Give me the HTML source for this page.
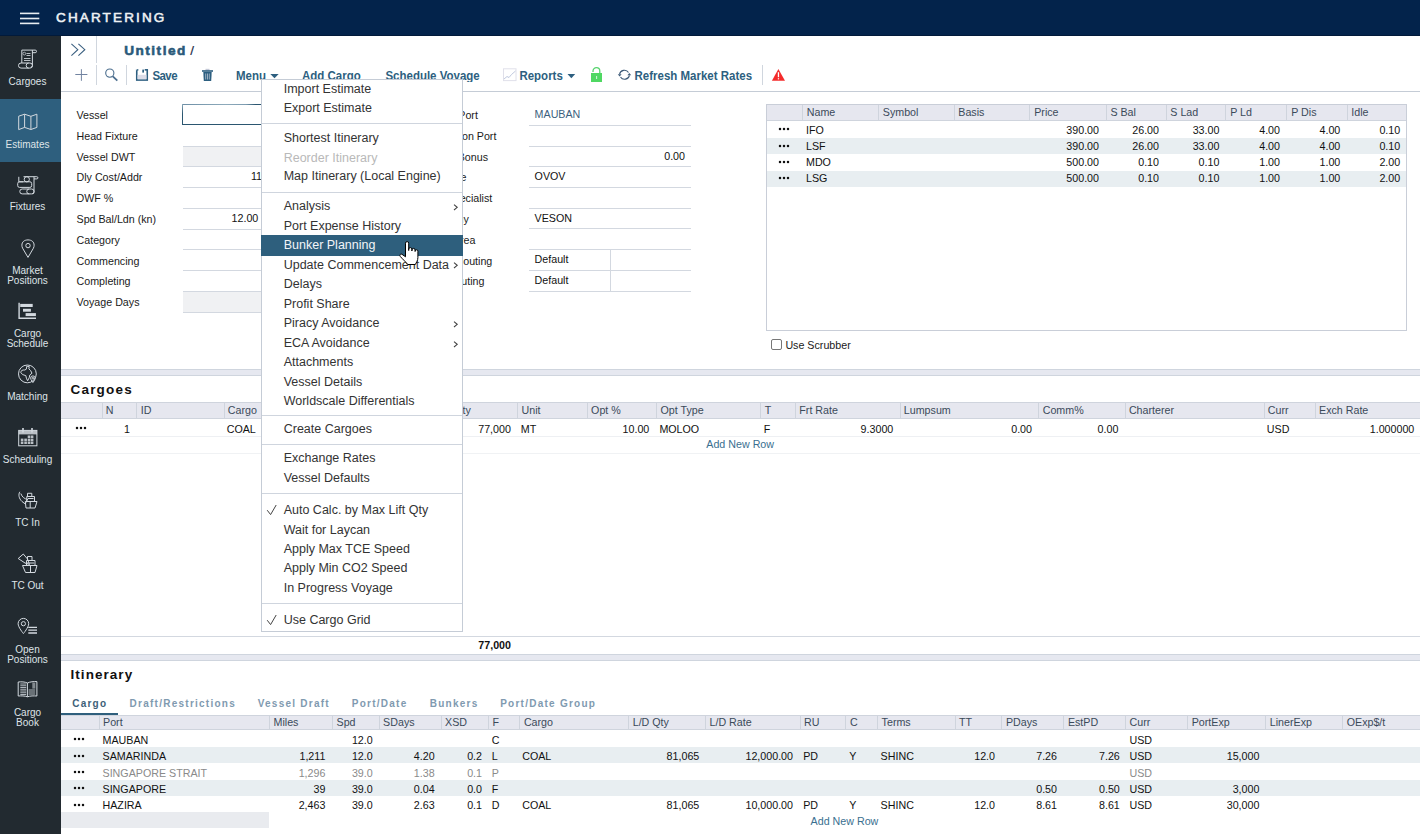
<!DOCTYPE html>
<html><head><meta charset="utf-8">
<style>
*{box-sizing:border-box;margin:0;padding:0}
html,body{width:1420px;height:834px;overflow:hidden;background:#fff;font-family:"Liberation Sans",sans-serif;color:#111}
.a{position:absolute;white-space:nowrap}
svg{position:absolute;overflow:visible}
</style></head><body>

<div style="position:absolute;left:0px;top:0px;width:1420px;height:36px;background:#03234b;"></div>
<div style="position:absolute;left:0px;top:35px;width:1420px;height:1px;background:#021a3a;"></div>
<svg style="position:absolute;left:19px;top:10px" width="22" height="16" viewBox="0 0 22 16"><g fill="#e9edf1"><rect x="1" y="2.6" width="19.3" height="1.6"/><rect x="1" y="7.7" width="19.3" height="1.6"/><rect x="1" y="12.6" width="19.3" height="1.6"/></g></svg>
<div class="a" style="top:10.57px;font-size:13.5px;line-height:13.5px;color:#eef1f4;letter-spacing:2.15px;left:56.00px;-webkit-text-stroke:0.55px #eef1f4;">CHARTERING</div>
<div style="position:absolute;left:0px;top:36px;width:61px;height:798px;background:#222a30;"></div>
<div style="position:absolute;left:0px;top:99px;width:61px;height:63px;background:#2e5f7e;"></div>
<div class="a" style="left:0;width:55px;text-align:center;top:76.83px;font-size:10px;line-height:10px;color:#dfe4e8">Cargoes</div>
<div class="a" style="left:0;width:55px;text-align:center;top:139.53px;font-size:10px;line-height:10px;color:#dfe4e8">Estimates</div>
<div class="a" style="left:0;width:55px;text-align:center;top:202.44px;font-size:10px;line-height:10px;color:#dfe4e8">Fixtures</div>
<div class="a" style="left:0;width:55px;text-align:center;top:266.04px;font-size:10px;line-height:10px;color:#dfe4e8">Market</div>
<div class="a" style="left:0;width:55px;text-align:center;top:275.64px;font-size:10px;line-height:10px;color:#dfe4e8">Positions</div>
<div class="a" style="left:0;width:55px;text-align:center;top:329.04px;font-size:10px;line-height:10px;color:#dfe4e8">Cargo</div>
<div class="a" style="left:0;width:55px;text-align:center;top:338.64px;font-size:10px;line-height:10px;color:#dfe4e8">Schedule</div>
<div class="a" style="left:0;width:55px;text-align:center;top:392.34px;font-size:10px;line-height:10px;color:#dfe4e8">Matching</div>
<div class="a" style="left:0;width:55px;text-align:center;top:455.34px;font-size:10px;line-height:10px;color:#dfe4e8">Scheduling</div>
<div class="a" style="left:0;width:55px;text-align:center;top:518.34px;font-size:10px;line-height:10px;color:#dfe4e8">TC In</div>
<div class="a" style="left:0;width:55px;text-align:center;top:581.34px;font-size:10px;line-height:10px;color:#dfe4e8">TC Out</div>
<div class="a" style="left:0;width:55px;text-align:center;top:645.03px;font-size:10px;line-height:10px;color:#dfe4e8">Open</div>
<div class="a" style="left:0;width:55px;text-align:center;top:654.63px;font-size:10px;line-height:10px;color:#dfe4e8">Positions</div>
<div class="a" style="left:0;width:55px;text-align:center;top:708.03px;font-size:10px;line-height:10px;color:#dfe4e8">Cargo</div>
<div class="a" style="left:0;width:55px;text-align:center;top:717.63px;font-size:10px;line-height:10px;color:#dfe4e8">Book</div>
<div style="position:absolute;left:96px;top:36px;width:1px;height:27px;background:#d0d6de;"></div>
<div class="a" style="top:44.09px;font-size:13.6px;line-height:13.6px;color:#2a5a7a;font-weight:bold;letter-spacing:1.5px;left:124.20px;-webkit-text-stroke:0.6px #2a5a7a;">Untitled</div>
<div class="a" style="top:43.77px;font-size:13.5px;line-height:13.5px;color:#1b2b45;left:190.30px;-webkit-text-stroke:0.2px #1b2b45;">/</div>
<div style="position:absolute;left:96px;top:65px;width:1px;height:20px;background:#d0d6de;"></div>
<div style="position:absolute;left:126px;top:65px;width:1px;height:20px;background:#d0d6de;"></div>
<div class="a" style="top:69.97px;font-size:11.5px;line-height:11.5px;color:#2d5f80;font-weight:bold;letter-spacing:-0.6px;left:152.50px;transform:scaleY(1.08);transform-origin:0 1.35px;">Save</div>
<div class="a" style="top:70.17px;font-size:11.5px;line-height:11.5px;color:#2d5f80;font-weight:bold;left:236.00px;transform:scaleY(1.08);transform-origin:0 1.35px;">Menu</div>
<div class="a" style="top:70.17px;font-size:11.5px;line-height:11.5px;color:#2d5f80;font-weight:bold;left:302.00px;transform:scaleY(1.08);transform-origin:0 1.35px;">Add Cargo</div>
<div class="a" style="top:70.17px;font-size:11.5px;line-height:11.5px;color:#2d5f80;font-weight:bold;left:385.40px;transform:scaleY(1.08);transform-origin:0 1.35px;">Schedule Voyage</div>
<div class="a" style="top:70.17px;font-size:11.5px;line-height:11.5px;color:#2d5f80;font-weight:bold;left:519.40px;transform:scaleY(1.08);transform-origin:0 1.35px;">Reports</div>
<div class="a" style="top:69.97px;font-size:11.5px;line-height:11.5px;color:#2d5f80;font-weight:bold;left:634.50px;transform:scaleY(1.08);transform-origin:0 1.35px;">Refresh Market Rates</div>
<div style="position:absolute;left:762px;top:65px;width:1px;height:20px;background:#d0d6de;"></div>
<div style="position:absolute;left:61px;top:91px;width:1359px;height:1px;background:#c5ccd6;"></div>
<div class="a" style="top:109.94px;font-size:10.7px;line-height:10.7px;color:#1a1a1a;left:76.50px;">Vessel</div>
<div class="a" style="top:130.74px;font-size:10.7px;line-height:10.7px;color:#1a1a1a;left:76.50px;">Head Fixture</div>
<div class="a" style="top:151.54px;font-size:10.7px;line-height:10.7px;color:#1a1a1a;left:76.50px;">Vessel DWT</div>
<div class="a" style="top:172.34px;font-size:10.7px;line-height:10.7px;color:#1a1a1a;left:76.50px;">Dly Cost/Addr</div>
<div class="a" style="top:193.14px;font-size:10.7px;line-height:10.7px;color:#1a1a1a;left:76.50px;">DWF %</div>
<div class="a" style="top:213.94px;font-size:10.7px;line-height:10.7px;color:#1a1a1a;left:76.50px;">Spd Bal/Ldn (kn)</div>
<div class="a" style="top:234.74px;font-size:10.7px;line-height:10.7px;color:#1a1a1a;left:76.50px;">Category</div>
<div class="a" style="top:255.54px;font-size:10.7px;line-height:10.7px;color:#1a1a1a;left:76.50px;">Commencing</div>
<div class="a" style="top:276.34px;font-size:10.7px;line-height:10.7px;color:#1a1a1a;left:76.50px;">Completing</div>
<div class="a" style="top:297.14px;font-size:10.7px;line-height:10.7px;color:#1a1a1a;left:76.50px;">Voyage Days</div>
<div style="position:absolute;left:182px;top:104px;width:200px;height:21px;background:#fff;border:1px solid #2b5670;border-top:none;"></div>
<div style="position:absolute;left:182px;top:104px;width:80px;height:1px;background:linear-gradient(to right,#6d8fa6 0%,#8eaabb 55%,#7c9bb0 80%,#2b5670 92%,#2b5670 100%);"></div>
<div style="position:absolute;left:182px;top:104px;width:1px;height:10px;background:linear-gradient(to bottom,#8eaabb,#2b5670);"></div>
<div style="position:absolute;left:183px;top:146px;width:200px;height:20.5px;background:#f0f1f3;"></div>
<div style="position:absolute;left:183px;top:291px;width:200px;height:21px;background:#f0f1f3;"></div>
<div style="position:absolute;left:183px;top:145.5px;width:200px;height:1px;background:#d3d8e0;"></div>
<div style="position:absolute;left:183px;top:166px;width:200px;height:1px;background:#d3d8e0;"></div>
<div style="position:absolute;left:183px;top:187px;width:200px;height:1px;background:#d3d8e0;"></div>
<div style="position:absolute;left:183px;top:208px;width:200px;height:1px;background:#d3d8e0;"></div>
<div style="position:absolute;left:183px;top:228.5px;width:200px;height:1px;background:#d3d8e0;"></div>
<div style="position:absolute;left:183px;top:249px;width:200px;height:1px;background:#d3d8e0;"></div>
<div style="position:absolute;left:183px;top:270px;width:200px;height:1px;background:#d3d8e0;"></div>
<div style="position:absolute;left:183px;top:291px;width:200px;height:1px;background:#d3d8e0;"></div>
<div style="position:absolute;left:183px;top:312px;width:200px;height:1px;background:#d3d8e0;"></div>
<div class="a" style="top:170.94px;font-size:10.7px;line-height:10.7px;color:#111;right:1158.00px;text-align:right;">11</div>
<div class="a" style="top:212.74px;font-size:10.7px;line-height:10.7px;color:#111;right:1161.70px;text-align:right;">12.00</div>
<div class="a" style="top:109.94px;font-size:10.7px;line-height:10.7px;color:#1a1a1a;right:942.10px;text-align:right;">Ballast Port</div>
<div class="a" style="top:130.74px;font-size:10.7px;line-height:10.7px;color:#1a1a1a;right:923.60px;text-align:right;">Reposition Port</div>
<div class="a" style="top:151.54px;font-size:10.7px;line-height:10.7px;color:#1a1a1a;right:932.00px;text-align:right;">Ballast Bonus</div>
<div class="a" style="top:172.34px;font-size:10.7px;line-height:10.7px;color:#1a1a1a;right:953.60px;text-align:right;">Vessel Type</div>
<div class="a" style="top:193.14px;font-size:10.7px;line-height:10.7px;color:#1a1a1a;right:927.70px;text-align:right;">Specialist</div>
<div class="a" style="top:213.94px;font-size:10.7px;line-height:10.7px;color:#1a1a1a;right:951.20px;text-align:right;">Company</div>
<div class="a" style="top:234.74px;font-size:10.7px;line-height:10.7px;color:#1a1a1a;right:944.50px;text-align:right;">Trade Area</div>
<div class="a" style="top:255.54px;font-size:10.7px;line-height:10.7px;color:#1a1a1a;right:927.70px;text-align:right;">Routing</div>
<div class="a" style="top:276.34px;font-size:10.7px;line-height:10.7px;color:#1a1a1a;right:935.60px;text-align:right;">Routing</div>
<div style="position:absolute;left:529px;top:125px;width:162px;height:1px;background:#d3d8e0;"></div>
<div style="position:absolute;left:529px;top:146px;width:162px;height:1px;background:#d3d8e0;"></div>
<div style="position:absolute;left:529px;top:166.3px;width:162px;height:1px;background:#d3d8e0;"></div>
<div style="position:absolute;left:529px;top:187px;width:162px;height:1px;background:#d3d8e0;"></div>
<div style="position:absolute;left:529px;top:208px;width:162px;height:1px;background:#d3d8e0;"></div>
<div style="position:absolute;left:529px;top:228.4px;width:162px;height:1px;background:#d3d8e0;"></div>
<div style="position:absolute;left:529px;top:249.3px;width:162px;height:1px;background:#d3d8e0;"></div>
<div style="position:absolute;left:529px;top:270.2px;width:162px;height:1px;background:#d3d8e0;"></div>
<div style="position:absolute;left:529px;top:291px;width:162px;height:1px;background:#d3d8e0;"></div>
<div style="position:absolute;left:610px;top:249px;width:1px;height:42px;background:#d3d8e0;"></div>
<div class="a" style="top:109.24px;font-size:10.7px;line-height:10.7px;color:#3d5f7e;left:534.60px;">MAUBAN</div>
<div class="a" style="top:151.24px;font-size:10.7px;line-height:10.7px;color:#111;right:735.00px;text-align:right;">0.00</div>
<div class="a" style="top:171.44px;font-size:10.7px;line-height:10.7px;color:#111;left:534.60px;">OVOV</div>
<div class="a" style="top:212.94px;font-size:10.7px;line-height:10.7px;color:#111;left:534.60px;">VESON</div>
<div class="a" style="top:254.44px;font-size:10.7px;line-height:10.7px;color:#111;left:534.60px;">Default</div>
<div class="a" style="top:275.24px;font-size:10.7px;line-height:10.7px;color:#111;left:534.60px;">Default</div>
<div style="position:absolute;left:766px;top:104px;width:641px;height:227px;background:#fff;border:1px solid #c9ced8;"></div>
<div style="position:absolute;left:767px;top:105px;width:639px;height:16px;background:#e6e7ef;border-bottom:1px solid #cfd4dd;"></div>
<div style="position:absolute;left:802px;top:105px;width:1px;height:15px;background:#cfd4dd;"></div>
<div style="position:absolute;left:878px;top:105px;width:1px;height:15px;background:#cfd4dd;"></div>
<div style="position:absolute;left:953.5px;top:105px;width:1px;height:15px;background:#cfd4dd;"></div>
<div style="position:absolute;left:1029.4px;top:105px;width:1px;height:15px;background:#cfd4dd;"></div>
<div style="position:absolute;left:1105.6px;top:105px;width:1px;height:15px;background:#cfd4dd;"></div>
<div style="position:absolute;left:1165.5px;top:105px;width:1px;height:15px;background:#cfd4dd;"></div>
<div style="position:absolute;left:1225.4px;top:105px;width:1px;height:15px;background:#cfd4dd;"></div>
<div style="position:absolute;left:1286.4px;top:105px;width:1px;height:15px;background:#cfd4dd;"></div>
<div style="position:absolute;left:1346.5px;top:105px;width:1px;height:15px;background:#cfd4dd;"></div>
<div class="a" style="top:106.74px;font-size:10.7px;line-height:10.7px;color:#3b4a5a;left:806.80px;">Name</div>
<div class="a" style="top:106.74px;font-size:10.7px;line-height:10.7px;color:#3b4a5a;left:882.80px;">Symbol</div>
<div class="a" style="top:106.74px;font-size:10.7px;line-height:10.7px;color:#3b4a5a;left:958.30px;">Basis</div>
<div class="a" style="top:106.74px;font-size:10.7px;line-height:10.7px;color:#3b4a5a;left:1034.20px;">Price</div>
<div class="a" style="top:106.74px;font-size:10.7px;line-height:10.7px;color:#3b4a5a;left:1110.40px;">S Bal</div>
<div class="a" style="top:106.74px;font-size:10.7px;line-height:10.7px;color:#3b4a5a;left:1170.30px;">S Lad</div>
<div class="a" style="top:106.74px;font-size:10.7px;line-height:10.7px;color:#3b4a5a;left:1230.20px;">P Ld</div>
<div class="a" style="top:106.74px;font-size:10.7px;line-height:10.7px;color:#3b4a5a;left:1291.20px;">P Dis</div>
<div class="a" style="top:106.74px;font-size:10.7px;line-height:10.7px;color:#3b4a5a;left:1351.30px;">Idle</div>
<div class="a" style="top:124.54px;font-size:10.7px;line-height:10.7px;color:#111;left:806.00px;">IFO</div>
<div class="a" style="top:124.54px;font-size:10.7px;line-height:10.7px;color:#111;right:321.00px;text-align:right;">390.00</div>
<div class="a" style="top:124.54px;font-size:10.7px;line-height:10.7px;color:#111;right:261.00px;text-align:right;">26.00</div>
<div class="a" style="top:124.54px;font-size:10.7px;line-height:10.7px;color:#111;right:200.60px;text-align:right;">33.00</div>
<div class="a" style="top:124.54px;font-size:10.7px;line-height:10.7px;color:#111;right:140.00px;text-align:right;">4.00</div>
<div class="a" style="top:124.54px;font-size:10.7px;line-height:10.7px;color:#111;right:79.70px;text-align:right;">4.00</div>
<div class="a" style="top:124.54px;font-size:10.7px;line-height:10.7px;color:#111;right:19.80px;text-align:right;">0.10</div>
<svg style="left:778.30px;top:127.35px" width="12" height="4" viewBox="0 0 12 4"><g fill="#111"><circle cx="2" cy="2" r="1.25"/><circle cx="6" cy="2" r="1.25"/><circle cx="10" cy="2" r="1.25"/></g></svg>
<div style="position:absolute;left:767px;top:138.10000000000002px;width:639px;height:16px;background:#e8eef1;"></div>
<div class="a" style="top:140.69px;font-size:10.7px;line-height:10.7px;color:#111;left:806.00px;">LSF</div>
<div class="a" style="top:140.69px;font-size:10.7px;line-height:10.7px;color:#111;right:321.00px;text-align:right;">390.00</div>
<div class="a" style="top:140.69px;font-size:10.7px;line-height:10.7px;color:#111;right:261.00px;text-align:right;">26.00</div>
<div class="a" style="top:140.69px;font-size:10.7px;line-height:10.7px;color:#111;right:200.60px;text-align:right;">33.00</div>
<div class="a" style="top:140.69px;font-size:10.7px;line-height:10.7px;color:#111;right:140.00px;text-align:right;">4.00</div>
<div class="a" style="top:140.69px;font-size:10.7px;line-height:10.7px;color:#111;right:79.70px;text-align:right;">4.00</div>
<div class="a" style="top:140.69px;font-size:10.7px;line-height:10.7px;color:#111;right:19.80px;text-align:right;">0.10</div>
<svg style="left:778.30px;top:143.50px" width="12" height="4" viewBox="0 0 12 4"><g fill="#111"><circle cx="2" cy="2" r="1.25"/><circle cx="6" cy="2" r="1.25"/><circle cx="10" cy="2" r="1.25"/></g></svg>
<div class="a" style="top:156.84px;font-size:10.7px;line-height:10.7px;color:#111;left:806.00px;">MDO</div>
<div class="a" style="top:156.84px;font-size:10.7px;line-height:10.7px;color:#111;right:321.00px;text-align:right;">500.00</div>
<div class="a" style="top:156.84px;font-size:10.7px;line-height:10.7px;color:#111;right:261.00px;text-align:right;">0.10</div>
<div class="a" style="top:156.84px;font-size:10.7px;line-height:10.7px;color:#111;right:200.60px;text-align:right;">0.10</div>
<div class="a" style="top:156.84px;font-size:10.7px;line-height:10.7px;color:#111;right:140.00px;text-align:right;">1.00</div>
<div class="a" style="top:156.84px;font-size:10.7px;line-height:10.7px;color:#111;right:79.70px;text-align:right;">1.00</div>
<div class="a" style="top:156.84px;font-size:10.7px;line-height:10.7px;color:#111;right:19.80px;text-align:right;">2.00</div>
<svg style="left:778.30px;top:159.65px" width="12" height="4" viewBox="0 0 12 4"><g fill="#111"><circle cx="2" cy="2" r="1.25"/><circle cx="6" cy="2" r="1.25"/><circle cx="10" cy="2" r="1.25"/></g></svg>
<div style="position:absolute;left:767px;top:170.70000000000002px;width:639px;height:16px;background:#e8eef1;"></div>
<div class="a" style="top:172.99px;font-size:10.7px;line-height:10.7px;color:#111;left:806.00px;">LSG</div>
<div class="a" style="top:172.99px;font-size:10.7px;line-height:10.7px;color:#111;right:321.00px;text-align:right;">500.00</div>
<div class="a" style="top:172.99px;font-size:10.7px;line-height:10.7px;color:#111;right:261.00px;text-align:right;">0.10</div>
<div class="a" style="top:172.99px;font-size:10.7px;line-height:10.7px;color:#111;right:200.60px;text-align:right;">0.10</div>
<div class="a" style="top:172.99px;font-size:10.7px;line-height:10.7px;color:#111;right:140.00px;text-align:right;">1.00</div>
<div class="a" style="top:172.99px;font-size:10.7px;line-height:10.7px;color:#111;right:79.70px;text-align:right;">1.00</div>
<div class="a" style="top:172.99px;font-size:10.7px;line-height:10.7px;color:#111;right:19.80px;text-align:right;">2.00</div>
<svg style="left:778.30px;top:175.80px" width="12" height="4" viewBox="0 0 12 4"><g fill="#111"><circle cx="2" cy="2" r="1.25"/><circle cx="6" cy="2" r="1.25"/><circle cx="10" cy="2" r="1.25"/></g></svg>
<div style="position:absolute;left:771px;top:339px;width:11px;height:11px;background:#fff;border:1px solid #777;border-radius:2px;"></div>
<div class="a" style="top:339.84px;font-size:10.7px;line-height:10.7px;color:#1a1a1a;left:785.40px;">Use Scrubber</div>
<div style="position:absolute;left:61px;top:369px;width:1359px;height:7px;background:#e6e8f0;border-top:1px solid #cfd5de;border-bottom:1px solid #cfd5de;"></div>
<div style="position:absolute;left:61px;top:653.5px;width:1359px;height:7px;background:#e6e8f0;border-top:1px solid #cfd5de;border-bottom:1px solid #cfd5de;"></div>
<div class="a" style="top:383.47px;font-size:13.5px;line-height:13.5px;color:#111;font-weight:bold;letter-spacing:1.2px;left:70.50px;">Cargoes</div>
<div style="position:absolute;left:61px;top:402px;width:1359px;height:16.5px;background:#e6e7ef;border-top:1px solid #cfd4dd;border-bottom:1px solid #cfd4dd;"></div>
<div style="position:absolute;left:101.5px;top:402.5px;width:1px;height:15.5px;background:#cfd4dd;"></div>
<div style="position:absolute;left:136.4px;top:402.5px;width:1px;height:15.5px;background:#cfd4dd;"></div>
<div style="position:absolute;left:223.5px;top:402.5px;width:1px;height:15.5px;background:#cfd4dd;"></div>
<div style="position:absolute;left:450px;top:402.5px;width:1px;height:15.5px;background:#cfd4dd;"></div>
<div style="position:absolute;left:517.2px;top:402.5px;width:1px;height:15.5px;background:#cfd4dd;"></div>
<div style="position:absolute;left:586.8px;top:402.5px;width:1px;height:15.5px;background:#cfd4dd;"></div>
<div style="position:absolute;left:656.2px;top:402.5px;width:1px;height:15.5px;background:#cfd4dd;"></div>
<div style="position:absolute;left:760.4px;top:402.5px;width:1px;height:15.5px;background:#cfd4dd;"></div>
<div style="position:absolute;left:795px;top:402.5px;width:1px;height:15.5px;background:#cfd4dd;"></div>
<div style="position:absolute;left:899.5px;top:402.5px;width:1px;height:15.5px;background:#cfd4dd;"></div>
<div style="position:absolute;left:1038.4px;top:402.5px;width:1px;height:15.5px;background:#cfd4dd;"></div>
<div style="position:absolute;left:1124.6px;top:402.5px;width:1px;height:15.5px;background:#cfd4dd;"></div>
<div style="position:absolute;left:1263.5px;top:402.5px;width:1px;height:15.5px;background:#cfd4dd;"></div>
<div style="position:absolute;left:1314.7px;top:402.5px;width:1px;height:15.5px;background:#cfd4dd;"></div>
<div class="a" style="top:405.14px;font-size:10.7px;line-height:10.7px;color:#3b4a5a;left:105.80px;">N</div>
<div class="a" style="top:405.14px;font-size:10.7px;line-height:10.7px;color:#3b4a5a;left:140.70px;">ID</div>
<div class="a" style="top:405.14px;font-size:10.7px;line-height:10.7px;color:#3b4a5a;left:227.80px;">Cargo</div>
<div class="a" style="top:405.14px;font-size:10.7px;line-height:10.7px;color:#3b4a5a;left:454.30px;">Qty</div>
<div class="a" style="top:405.14px;font-size:10.7px;line-height:10.7px;color:#3b4a5a;left:521.50px;">Unit</div>
<div class="a" style="top:405.14px;font-size:10.7px;line-height:10.7px;color:#3b4a5a;left:591.10px;">Opt %</div>
<div class="a" style="top:405.14px;font-size:10.7px;line-height:10.7px;color:#3b4a5a;left:660.50px;">Opt Type</div>
<div class="a" style="top:405.14px;font-size:10.7px;line-height:10.7px;color:#3b4a5a;left:764.70px;">T</div>
<div class="a" style="top:405.14px;font-size:10.7px;line-height:10.7px;color:#3b4a5a;left:799.30px;">Frt Rate</div>
<div class="a" style="top:405.14px;font-size:10.7px;line-height:10.7px;color:#3b4a5a;left:903.80px;">Lumpsum</div>
<div class="a" style="top:405.14px;font-size:10.7px;line-height:10.7px;color:#3b4a5a;left:1042.70px;">Comm%</div>
<div class="a" style="top:405.14px;font-size:10.7px;line-height:10.7px;color:#3b4a5a;left:1128.90px;">Charterer</div>
<div class="a" style="top:405.14px;font-size:10.7px;line-height:10.7px;color:#3b4a5a;left:1267.80px;">Curr</div>
<div class="a" style="top:405.14px;font-size:10.7px;line-height:10.7px;color:#3b4a5a;left:1319.00px;">Exch Rate</div>
<svg style="left:75.40px;top:426.40px" width="12" height="4" viewBox="0 0 12 4"><g fill="#111"><circle cx="2" cy="2" r="1.25"/><circle cx="6" cy="2" r="1.25"/><circle cx="10" cy="2" r="1.25"/></g></svg>
<div class="a" style="top:423.84px;font-size:10.7px;line-height:10.7px;color:#111;right:1290.00px;text-align:right;">1</div>
<div class="a" style="top:423.84px;font-size:10.7px;line-height:10.7px;color:#111;left:226.70px;">COAL</div>
<div class="a" style="top:423.84px;font-size:10.7px;line-height:10.7px;color:#111;right:909.10px;text-align:right;">77,000</div>
<div class="a" style="top:423.84px;font-size:10.7px;line-height:10.7px;color:#111;left:520.80px;">MT</div>
<div class="a" style="top:423.84px;font-size:10.7px;line-height:10.7px;color:#111;right:770.70px;text-align:right;">10.00</div>
<div class="a" style="top:423.84px;font-size:10.7px;line-height:10.7px;color:#111;left:659.40px;">MOLOO</div>
<div class="a" style="top:423.84px;font-size:10.7px;line-height:10.7px;color:#111;left:763.70px;">F</div>
<div class="a" style="top:423.84px;font-size:10.7px;line-height:10.7px;color:#111;right:526.70px;text-align:right;">9.3000</div>
<div class="a" style="top:423.84px;font-size:10.7px;line-height:10.7px;color:#111;right:388.00px;text-align:right;">0.00</div>
<div class="a" style="top:423.84px;font-size:10.7px;line-height:10.7px;color:#111;right:301.60px;text-align:right;">0.00</div>
<div class="a" style="top:423.84px;font-size:10.7px;line-height:10.7px;color:#111;left:1266.80px;">USD</div>
<div class="a" style="top:423.84px;font-size:10.7px;line-height:10.7px;color:#111;right:5.70px;text-align:right;">1.000000</div>
<div style="position:absolute;left:61px;top:436px;width:1359px;height:1px;background:#eef0f3;"></div>
<div class="a" style="top:438.94px;font-size:10.7px;line-height:10.7px;color:#3a6f8f;left:706.30px;">Add New Row</div>
<div style="position:absolute;left:61px;top:452.5px;width:1359px;height:1px;background:#f0f2f4;"></div>
<div style="position:absolute;left:61px;top:636px;width:1359px;height:1px;background:#d3d8e0;"></div>
<div class="a" style="top:639.54px;font-size:10.7px;line-height:10.7px;color:#111;font-weight:bold;right:909.00px;text-align:right;">77,000</div>
<div class="a" style="top:667.97px;font-size:13.5px;line-height:13.5px;color:#111;font-weight:bold;letter-spacing:1.05px;left:70.50px;">Itinerary</div>
<div class="a" style="top:698.83px;font-size:10px;line-height:10px;color:#3d5f78;font-weight:bold;letter-spacing:1.25px;left:72.20px;">Cargo</div>
<div class="a" style="top:698.83px;font-size:10px;line-height:10px;color:#7f9ab0;font-weight:bold;letter-spacing:1.25px;left:129.60px;">Draft/Restrictions</div>
<div class="a" style="top:698.83px;font-size:10px;line-height:10px;color:#7f9ab0;font-weight:bold;letter-spacing:1.25px;left:257.70px;">Vessel Draft</div>
<div class="a" style="top:698.83px;font-size:10px;line-height:10px;color:#7f9ab0;font-weight:bold;letter-spacing:1.25px;left:351.80px;">Port/Date</div>
<div class="a" style="top:698.83px;font-size:10px;line-height:10px;color:#7f9ab0;font-weight:bold;letter-spacing:1.25px;left:429.70px;">Bunkers</div>
<div class="a" style="top:698.83px;font-size:10px;line-height:10px;color:#7f9ab0;font-weight:bold;letter-spacing:1.25px;left:500.20px;">Port/Date Group</div>
<div style="position:absolute;left:61px;top:713px;width:57px;height:2px;background:#2f5f7d;"></div>
<div style="position:absolute;left:61px;top:714.5px;width:1359px;height:15.5px;background:#e6e7ef;border-top:1px solid #cfd4dd;border-bottom:1px solid #cfd4dd;"></div>
<div style="position:absolute;left:98.5px;top:715.5px;width:1px;height:13.5px;background:#cfd4dd;"></div>
<div style="position:absolute;left:269px;top:715.5px;width:1px;height:13.5px;background:#cfd4dd;"></div>
<div style="position:absolute;left:332px;top:715.5px;width:1px;height:13.5px;background:#cfd4dd;"></div>
<div style="position:absolute;left:378.6px;top:715.5px;width:1px;height:13.5px;background:#cfd4dd;"></div>
<div style="position:absolute;left:440.5px;top:715.5px;width:1px;height:13.5px;background:#cfd4dd;"></div>
<div style="position:absolute;left:487.9px;top:715.5px;width:1px;height:13.5px;background:#cfd4dd;"></div>
<div style="position:absolute;left:519.4px;top:715.5px;width:1px;height:13.5px;background:#cfd4dd;"></div>
<div style="position:absolute;left:628.2px;top:715.5px;width:1px;height:13.5px;background:#cfd4dd;"></div>
<div style="position:absolute;left:705px;top:715.5px;width:1px;height:13.5px;background:#cfd4dd;"></div>
<div style="position:absolute;left:799.6px;top:715.5px;width:1px;height:13.5px;background:#cfd4dd;"></div>
<div style="position:absolute;left:845.4px;top:715.5px;width:1px;height:13.5px;background:#cfd4dd;"></div>
<div style="position:absolute;left:877.1px;top:715.5px;width:1px;height:13.5px;background:#cfd4dd;"></div>
<div style="position:absolute;left:954.6px;top:715.5px;width:1px;height:13.5px;background:#cfd4dd;"></div>
<div style="position:absolute;left:1001.4px;top:715.5px;width:1px;height:13.5px;background:#cfd4dd;"></div>
<div style="position:absolute;left:1063.4px;top:715.5px;width:1px;height:13.5px;background:#cfd4dd;"></div>
<div style="position:absolute;left:1125.1px;top:715.5px;width:1px;height:13.5px;background:#cfd4dd;"></div>
<div style="position:absolute;left:1187.2px;top:715.5px;width:1px;height:13.5px;background:#cfd4dd;"></div>
<div style="position:absolute;left:1265.3px;top:715.5px;width:1px;height:13.5px;background:#cfd4dd;"></div>
<div style="position:absolute;left:1342.2px;top:715.5px;width:1px;height:13.5px;background:#cfd4dd;"></div>
<div class="a" style="top:716.94px;font-size:10.7px;line-height:10.7px;color:#3b4a5a;left:103.00px;">Port</div>
<div class="a" style="top:716.94px;font-size:10.7px;line-height:10.7px;color:#3b4a5a;left:273.50px;">Miles</div>
<div class="a" style="top:716.94px;font-size:10.7px;line-height:10.7px;color:#3b4a5a;left:336.50px;">Spd</div>
<div class="a" style="top:716.94px;font-size:10.7px;line-height:10.7px;color:#3b4a5a;left:383.10px;">SDays</div>
<div class="a" style="top:716.94px;font-size:10.7px;line-height:10.7px;color:#3b4a5a;left:445.00px;">XSD</div>
<div class="a" style="top:716.94px;font-size:10.7px;line-height:10.7px;color:#3b4a5a;left:492.40px;">F</div>
<div class="a" style="top:716.94px;font-size:10.7px;line-height:10.7px;color:#3b4a5a;left:523.90px;">Cargo</div>
<div class="a" style="top:716.94px;font-size:10.7px;line-height:10.7px;color:#3b4a5a;left:632.70px;">L/D Qty</div>
<div class="a" style="top:716.94px;font-size:10.7px;line-height:10.7px;color:#3b4a5a;left:709.50px;">L/D Rate</div>
<div class="a" style="top:716.94px;font-size:10.7px;line-height:10.7px;color:#3b4a5a;left:804.10px;">RU</div>
<div class="a" style="top:716.94px;font-size:10.7px;line-height:10.7px;color:#3b4a5a;left:849.90px;">C</div>
<div class="a" style="top:716.94px;font-size:10.7px;line-height:10.7px;color:#3b4a5a;left:881.60px;">Terms</div>
<div class="a" style="top:716.94px;font-size:10.7px;line-height:10.7px;color:#3b4a5a;left:959.10px;">TT</div>
<div class="a" style="top:716.94px;font-size:10.7px;line-height:10.7px;color:#3b4a5a;left:1005.90px;">PDays</div>
<div class="a" style="top:716.94px;font-size:10.7px;line-height:10.7px;color:#3b4a5a;left:1067.90px;">EstPD</div>
<div class="a" style="top:716.94px;font-size:10.7px;line-height:10.7px;color:#3b4a5a;left:1129.60px;">Curr</div>
<div class="a" style="top:716.94px;font-size:10.7px;line-height:10.7px;color:#3b4a5a;left:1191.70px;">PortExp</div>
<div class="a" style="top:716.94px;font-size:10.7px;line-height:10.7px;color:#3b4a5a;left:1269.80px;">LinerExp</div>
<div class="a" style="top:716.94px;font-size:10.7px;line-height:10.7px;color:#3b4a5a;left:1346.70px;">OExp$/t</div>
<div style="position:absolute;left:61px;top:747.2px;width:1359px;height:15.7px;background:#e8eef1;"></div>
<div style="position:absolute;left:61px;top:779.9px;width:1359px;height:15.7px;background:#e8eef1;"></div>
<svg style="left:73.40px;top:737.35px" width="12" height="4" viewBox="0 0 12 4"><g fill="#111"><circle cx="2" cy="2" r="1.25"/><circle cx="6" cy="2" r="1.25"/><circle cx="10" cy="2" r="1.25"/></g></svg>
<div class="a" style="top:734.94px;font-size:10.7px;line-height:10.7px;color:#111;left:102.50px;">MAUBAN</div>
<div class="a" style="top:734.94px;font-size:10.7px;line-height:10.7px;color:#111;right:1047.30px;text-align:right;">12.0</div>
<div class="a" style="top:734.94px;font-size:10.7px;line-height:10.7px;color:#111;left:491.80px;">C</div>
<div class="a" style="top:734.94px;font-size:10.7px;line-height:10.7px;color:#111;left:1129.50px;">USD</div>
<svg style="left:73.40px;top:753.65px" width="12" height="4" viewBox="0 0 12 4"><g fill="#111"><circle cx="2" cy="2" r="1.25"/><circle cx="6" cy="2" r="1.25"/><circle cx="10" cy="2" r="1.25"/></g></svg>
<div class="a" style="top:751.24px;font-size:10.7px;line-height:10.7px;color:#111;left:102.50px;">SAMARINDA</div>
<div class="a" style="top:751.24px;font-size:10.7px;line-height:10.7px;color:#111;right:1094.60px;text-align:right;">1,211</div>
<div class="a" style="top:751.24px;font-size:10.7px;line-height:10.7px;color:#111;right:1047.30px;text-align:right;">12.0</div>
<div class="a" style="top:751.24px;font-size:10.7px;line-height:10.7px;color:#111;right:985.40px;text-align:right;">4.20</div>
<div class="a" style="top:751.24px;font-size:10.7px;line-height:10.7px;color:#111;right:938.00px;text-align:right;">0.2</div>
<div class="a" style="top:751.24px;font-size:10.7px;line-height:10.7px;color:#111;left:491.80px;">L</div>
<div class="a" style="top:751.24px;font-size:10.7px;line-height:10.7px;color:#111;left:522.20px;">COAL</div>
<div class="a" style="top:751.24px;font-size:10.7px;line-height:10.7px;color:#111;right:720.70px;text-align:right;">81,065</div>
<div class="a" style="top:751.24px;font-size:10.7px;line-height:10.7px;color:#111;right:627.00px;text-align:right;">12,000.00</div>
<div class="a" style="top:751.24px;font-size:10.7px;line-height:10.7px;color:#111;left:803.20px;">PD</div>
<div class="a" style="top:751.24px;font-size:10.7px;line-height:10.7px;color:#111;left:849.30px;">Y</div>
<div class="a" style="top:751.24px;font-size:10.7px;line-height:10.7px;color:#111;left:880.60px;">SHINC</div>
<div class="a" style="top:751.24px;font-size:10.7px;line-height:10.7px;color:#111;right:425.00px;text-align:right;">12.0</div>
<div class="a" style="top:751.24px;font-size:10.7px;line-height:10.7px;color:#111;right:363.00px;text-align:right;">7.26</div>
<div class="a" style="top:751.24px;font-size:10.7px;line-height:10.7px;color:#111;right:300.20px;text-align:right;">7.26</div>
<div class="a" style="top:751.24px;font-size:10.7px;line-height:10.7px;color:#111;left:1129.50px;">USD</div>
<div class="a" style="top:751.24px;font-size:10.7px;line-height:10.7px;color:#111;right:160.60px;text-align:right;">15,000</div>
<svg style="left:73.40px;top:769.95px" width="12" height="4" viewBox="0 0 12 4"><g fill="#111"><circle cx="2" cy="2" r="1.25"/><circle cx="6" cy="2" r="1.25"/><circle cx="10" cy="2" r="1.25"/></g></svg>
<div class="a" style="top:767.54px;font-size:10.7px;line-height:10.7px;color:#8a8a8a;left:102.50px;">SINGAPORE STRAIT</div>
<div class="a" style="top:767.54px;font-size:10.7px;line-height:10.7px;color:#8a8a8a;right:1094.60px;text-align:right;">1,296</div>
<div class="a" style="top:767.54px;font-size:10.7px;line-height:10.7px;color:#8a8a8a;right:1047.30px;text-align:right;">39.0</div>
<div class="a" style="top:767.54px;font-size:10.7px;line-height:10.7px;color:#8a8a8a;right:985.40px;text-align:right;">1.38</div>
<div class="a" style="top:767.54px;font-size:10.7px;line-height:10.7px;color:#8a8a8a;right:938.00px;text-align:right;">0.1</div>
<div class="a" style="top:767.54px;font-size:10.7px;line-height:10.7px;color:#8a8a8a;left:491.80px;">P</div>
<div class="a" style="top:767.54px;font-size:10.7px;line-height:10.7px;color:#8a8a8a;left:1129.50px;">USD</div>
<svg style="left:73.40px;top:786.25px" width="12" height="4" viewBox="0 0 12 4"><g fill="#111"><circle cx="2" cy="2" r="1.25"/><circle cx="6" cy="2" r="1.25"/><circle cx="10" cy="2" r="1.25"/></g></svg>
<div class="a" style="top:783.84px;font-size:10.7px;line-height:10.7px;color:#111;left:102.50px;">SINGAPORE</div>
<div class="a" style="top:783.84px;font-size:10.7px;line-height:10.7px;color:#111;right:1094.60px;text-align:right;">39</div>
<div class="a" style="top:783.84px;font-size:10.7px;line-height:10.7px;color:#111;right:1047.30px;text-align:right;">39.0</div>
<div class="a" style="top:783.84px;font-size:10.7px;line-height:10.7px;color:#111;right:985.40px;text-align:right;">0.04</div>
<div class="a" style="top:783.84px;font-size:10.7px;line-height:10.7px;color:#111;right:938.00px;text-align:right;">0.0</div>
<div class="a" style="top:783.84px;font-size:10.7px;line-height:10.7px;color:#111;left:491.80px;">F</div>
<div class="a" style="top:783.84px;font-size:10.7px;line-height:10.7px;color:#111;right:363.00px;text-align:right;">0.50</div>
<div class="a" style="top:783.84px;font-size:10.7px;line-height:10.7px;color:#111;right:300.20px;text-align:right;">0.50</div>
<div class="a" style="top:783.84px;font-size:10.7px;line-height:10.7px;color:#111;left:1129.50px;">USD</div>
<div class="a" style="top:783.84px;font-size:10.7px;line-height:10.7px;color:#111;right:160.60px;text-align:right;">3,000</div>
<svg style="left:73.40px;top:802.55px" width="12" height="4" viewBox="0 0 12 4"><g fill="#111"><circle cx="2" cy="2" r="1.25"/><circle cx="6" cy="2" r="1.25"/><circle cx="10" cy="2" r="1.25"/></g></svg>
<div class="a" style="top:800.14px;font-size:10.7px;line-height:10.7px;color:#111;left:102.50px;">HAZIRA</div>
<div class="a" style="top:800.14px;font-size:10.7px;line-height:10.7px;color:#111;right:1094.60px;text-align:right;">2,463</div>
<div class="a" style="top:800.14px;font-size:10.7px;line-height:10.7px;color:#111;right:1047.30px;text-align:right;">39.0</div>
<div class="a" style="top:800.14px;font-size:10.7px;line-height:10.7px;color:#111;right:985.40px;text-align:right;">2.63</div>
<div class="a" style="top:800.14px;font-size:10.7px;line-height:10.7px;color:#111;right:938.00px;text-align:right;">0.1</div>
<div class="a" style="top:800.14px;font-size:10.7px;line-height:10.7px;color:#111;left:491.80px;">D</div>
<div class="a" style="top:800.14px;font-size:10.7px;line-height:10.7px;color:#111;left:522.20px;">COAL</div>
<div class="a" style="top:800.14px;font-size:10.7px;line-height:10.7px;color:#111;right:720.70px;text-align:right;">81,065</div>
<div class="a" style="top:800.14px;font-size:10.7px;line-height:10.7px;color:#111;right:627.00px;text-align:right;">10,000.00</div>
<div class="a" style="top:800.14px;font-size:10.7px;line-height:10.7px;color:#111;left:803.20px;">PD</div>
<div class="a" style="top:800.14px;font-size:10.7px;line-height:10.7px;color:#111;left:849.30px;">Y</div>
<div class="a" style="top:800.14px;font-size:10.7px;line-height:10.7px;color:#111;left:880.60px;">SHINC</div>
<div class="a" style="top:800.14px;font-size:10.7px;line-height:10.7px;color:#111;right:425.00px;text-align:right;">12.0</div>
<div class="a" style="top:800.14px;font-size:10.7px;line-height:10.7px;color:#111;right:363.00px;text-align:right;">8.61</div>
<div class="a" style="top:800.14px;font-size:10.7px;line-height:10.7px;color:#111;right:300.20px;text-align:right;">8.61</div>
<div class="a" style="top:800.14px;font-size:10.7px;line-height:10.7px;color:#111;left:1129.50px;">USD</div>
<div class="a" style="top:800.14px;font-size:10.7px;line-height:10.7px;color:#111;right:160.60px;text-align:right;">30,000</div>
<div style="position:absolute;left:61px;top:812px;width:208px;height:15.6px;background:#e9ebef;"></div>
<div class="a" style="top:815.94px;font-size:10.7px;line-height:10.7px;color:#3a6f8f;left:810.60px;">Add New Row</div>
<svg style="left:17px;top:49px" width="21" height="21" viewBox="0 0 21 21"><g fill="none" stroke="#d3d9df" stroke-width="1"><path d="M4.8,14 V1.1 H18.2 a1.3,1.3 0 0 1 0,2.6 H15.4"/><path d="M15.4,1.1 V16.6 a1.6,1.6 0 0 1 -1.6,1.6"/><rect x="1.5" y="14" width="14" height="5.1" rx="2.55"/><path d="M11.6,14 a2.4,2.55 0 0 0 0,5.1"/><path d="M9.5,4.5 H13.5 M9.5,6.5 H13.5 M7,9.5 H13.5 M7,11.5 H13.5" stroke-opacity="0.85"/><circle cx="7.3" cy="4.6" r="1.4" stroke-opacity="0.7"/></g></svg>
<svg style="left:18px;top:113px" width="20" height="18" viewBox="0 0 20 18"><g fill="none" stroke="#d3d9df" stroke-width="1"><path d="M0.7,3.2 L6.6,1.2 L12.9,3.3 L18.9,1.2 V14.4 L12.9,16.5 L6.6,14.4 L0.7,16.6 Z M6.6,1.2 V14.4 M12.9,3.3 V16.5"/></g></svg>
<svg style="left:16px;top:175px" width="23" height="21" viewBox="0 0 23 21"><g fill="none" stroke="#d3d9df" stroke-width="1"><path d="M7.5,1.7 H20.8 a1.1,1.1 0 0 1 0,2.2 H18"/><circle cx="10.8" cy="4.3" r="2.6"/><path d="M2.8,1.8 V6.8 H7.2"/><rect x="1.7" y="6.8" width="14" height="5.6" rx="1.8"/><path d="M18,1.8 V17.3 a1.6,1.6 0 0 1 -1.6,1.6"/><rect x="3.8" y="14" width="14.2" height="4.9" rx="2.4"/><path d="M13.2,14 a2.4,2.4 0 0 0 0,4.9"/></g></svg>
<svg style="left:20.5px;top:238.5px" width="14" height="20" viewBox="0 0 14 20"><g fill="none" stroke="#d3d9df" stroke-width="1"><path d="M7,18.4 L1.6,9.2 C1,8.1 0.9,7 0.9,6.2 C0.9,2.8 3.4,0.9 7,0.9 C10.6,0.9 13.1,2.8 13.1,6.2 C13.1,7 13,8.1 12.4,9.2 Z"/><circle cx="7" cy="6.6" r="2.2"/></g></svg>
<svg style="left:18px;top:302px" width="19" height="18" viewBox="0 0 19 18"><path d="M1.1,0.8 V16.2 H18" fill="none" stroke="#d3d9df" stroke-width="1.4"/><g fill="#d3d9df"><rect x="2.2" y="1.9" width="12.5" height="3.1"/><rect x="5" y="6.8" width="7.9" height="2.9"/><rect x="7.6" y="11.1" width="10.3" height="3"/></g></svg>
<svg style="left:17px;top:364px" width="21" height="21" viewBox="0 0 21 21"><g fill="none" stroke="#d3d9df" stroke-width="1"><circle cx="10.4" cy="9.9" r="8.9"/><path d="M3.8,8.5 C3.8,6.5 5.5,5.8 7.8,6 L9.3,5.2 L9.8,2.2 L12.3,2.6 L11.8,4.8 L13.6,6.6 L15,9.2 L12.8,11 L12.2,13.8 L10.6,16.8 L9.4,14.2 L8.8,11.6 L5.6,10.6 Z"/><path d="M13.6,14.2 a2.3,2.3 0 1 1 4.6,0 C18.2,15.6 15.9,18.6 15.9,18.6 C15.9,18.6 13.6,15.6 13.6,14.2 Z"/><circle cx="15.9" cy="14.2" r="0.8"/></g></svg>
<svg style="left:17px;top:427px" width="21" height="20" viewBox="0 0 21 20"><g fill="none" stroke="#d3d9df" stroke-width="1"><rect x="1.7" y="3.4" width="18.2" height="15.4"/></g><rect x="1.7" y="3.4" width="18.2" height="4" fill="#d3d9df" fill-opacity="0.85"/><g stroke="#d3d9df" stroke-width="1.6"><path d="M6,1 V5.5 M15,1 V5.5"/></g><g fill="#d3d9df" fill-opacity="0.85"><rect x="10.7" y="8.5" width="2.6" height="2.5"/><rect x="13.8" y="8.5" width="2.6" height="2.5"/><rect x="3.8" y="11.6" width="2.6" height="2.5"/><rect x="7.3" y="11.6" width="2.6" height="2.5"/><rect x="10.7" y="11.6" width="2.6" height="2.5"/><rect x="13.8" y="11.6" width="2.6" height="2.5"/><rect x="3.8" y="14.5" width="2.6" height="2.5"/><rect x="7.3" y="14.5" width="2.6" height="2.5"/><rect x="10.7" y="14.5" width="2.6" height="2.5"/><rect x="13.8" y="14.5" width="2.6" height="2.5"/></g></svg>
<svg style="left:17px;top:491px" width="21" height="19" viewBox="0 0 21 19"><g fill="none" stroke="#d3d9df" stroke-width="1"><path d="M8.3,10.5 H20 L18,17 H9 Z M13.2,10.5 V17"/><path d="M9.8,10.5 V5.5 H17.5 V10.5 M10.5,5.5 V2.3 H14.8 V5.5 M11,7.5 H16.5"/><path d="M2.8,0.8 C1.2,3.5 1.8,7.5 5,10.5 L8.3,13 L9.5,9.5 L11,8.5 C7.5,8 5,6 3.8,2.5"/></g></svg>
<svg style="left:17px;top:553px" width="21" height="21" viewBox="0 0 21 21"><g fill="none" stroke="#d3d9df" stroke-width="1"><path d="M5.5,12.5 H20 L18,19.5 H8.5 Z M13.5,12.5 V19.5"/><path d="M9.5,12.5 V7.5 H18 V12.5 M10.5,7.5 V3.5 H15 V7.5 M10,10 H17"/><path d="M1.2,5.5 L6.3,1 L10.5,6 L12.5,11.5 L8,10 Z"/></g></svg>
<svg style="left:17px;top:617px" width="21" height="18" viewBox="0 0 21 18"><g fill="none" stroke="#d3d9df" stroke-width="1"><path d="M6.4,16.6 C6.4,16.6 1.1,10.2 1.1,6.7 A5.3,5.3 0 0 1 11.7,6.7 C11.7,10.2 6.4,16.6 6.4,16.6 Z"/><circle cx="6.4" cy="6.7" r="2.1"/></g><g stroke="#d3d9df" stroke-width="1.3"><path d="M11.3,10.4 H20 M11.3,13.2 H20 M11.3,16 H20"/></g></svg>
<svg style="left:17px;top:680px" width="21" height="19" viewBox="0 0 21 19"><g fill="none" stroke="#d3d9df" stroke-width="1"><path d="M1.2,2 C4,1.6 8,1.8 10.4,3 C12.8,1.8 17,1.4 19.9,1.6 V16 C17,15.8 13,15.8 10.4,16.8 C8,15.8 4,15.8 1.2,16 Z M10.4,3 V16.8"/></g><g stroke="#d3d9df" stroke-width="0.9" stroke-opacity="0.9"><path d="M3.3,4.00 H9.2 M3.3,5.75 H9.2 M3.3,7.50 H9.2 M3.3,9.25 H9.2 M3.3,11.00 H9.2 M3.3,12.75 H9.2 M3.3,14.50 H9.2 M11.6,10 H18.2 M11.6,12 H18.2 M11.6,14 H18.2"/></g><rect x="15.3" y="2.6" width="3" height="6" fill="#d3d9df" fill-opacity="0.55"/></svg>
<svg style="left:70px;top:43px" width="17" height="14" viewBox="0 0 17 14"><g fill="none" stroke="#3b6080" stroke-width="1.1"><path d="M1.4,0.9 L7.8,6.7 L1.4,12.7 M8.4,0.9 L14.8,6.7 L8.4,12.7"/></g></svg>
<svg style="left:75px;top:69px" width="13" height="13" viewBox="0 0 13 13"><g stroke="#7183a0" stroke-width="1"><path d="M0.3,5.5 H12.4 M6.4,0.2 V11.8"/></g></svg>
<svg style="left:104px;top:68px" width="15" height="15" viewBox="0 0 15 15"><g fill="none" stroke="#4d6f8f"><circle cx="5.8" cy="5.1" r="4.1" stroke-width="1.1"/><path d="M8.8,8.3 L13.3,12.6" stroke-width="1.8"/></g></svg>
<svg style="left:135px;top:68px" width="14" height="14" viewBox="0 0 14 14"><g><rect x="1.75" y="1.85" width="10.5" height="10.2" fill="none" stroke="#2d5f80" stroke-width="1.6"/><rect x="2.6" y="6.8" width="8.8" height="4.4" fill="#dcdde8"/><rect x="3.3" y="1" width="6.4" height="4.2" fill="#fff"/><rect x="7.3" y="1.6" width="1.7" height="3" fill="#2d5f80"/><rect x="1.2" y="1.2" width="1" height="1" fill="#fff"/></g></svg>
<svg style="left:201px;top:68px" width="13" height="14" viewBox="0 0 13 14"><g><rect x="4.5" y="0.8" width="4" height="1.8" fill="#c5cad8"/><rect x="1" y="2.2" width="11" height="1.6" fill="#2d5f80"/><path d="M2.3,4 H10.7 L10.2,13 H2.8 Z" fill="#2d5f80"/><path d="M4.7,5.5 V11.5 M6.5,5.5 V11.5 M8.3,5.5 V11.5" stroke="#b8c4d2" stroke-width="0.8"/></g></svg>
<svg style="left:269px;top:73px" width="11" height="6" viewBox="0 0 11 6"><path d="M1.3,1 H9.7 L5.5,5.3 Z" fill="#2d5f80"/></svg>
<svg style="left:566px;top:73px" width="11" height="6" viewBox="0 0 11 6"><path d="M1.5,1 H9.2 L5.35,5.3 Z" fill="#2d5f80"/></svg>
<svg style="left:503px;top:68px" width="14" height="14" viewBox="0 0 14 14"><g fill="none"><rect x="0.5" y="0.8" width="12.5" height="11.8" stroke="#e0e0ea" stroke-width="1"/><path d="M1,11 L4,8.5 L6,9.5 L8.5,6.5 L12.5,3" stroke="#b9c3da" stroke-width="0.9"/></g></svg>
<svg style="left:590px;top:67px" width="13" height="16" viewBox="0 0 13 16"><g><path d="M3,5 V4 A3.4,3.4 0 0 1 9.8,4 V6" fill="none" stroke="#57d46e" stroke-width="1.3"/><rect x="1" y="6" width="11" height="9" fill="#4fd862"/><rect x="6.2" y="9" width="0.9" height="3" fill="#e8f8ea"/></g></svg>
<svg style="left:617px;top:69px" width="15" height="12" viewBox="0 0 15 12"><g fill="none" stroke="#3d5a78" stroke-width="1.1"><path d="M2.6,5.2 A4.8,4.5 0 0 1 11.5,3.5"/><path d="M12.4,6.3 A4.8,4.5 0 0 1 3.5,8"/></g><g fill="#3d5a78"><path d="M0.8,5.2 L2.6,7.5 L4.6,5.2 Z"/><path d="M14.2,6.3 L12.4,4 L10.4,6.3 Z"/></g></svg>
<svg style="left:771px;top:68px" width="15" height="14" viewBox="0 0 15 14"><g><path d="M7.4,0.9 L14,12.7 H0.9 Z" fill="#f42b2b"/><rect x="6.8" y="4.2" width="1.3" height="5" fill="#fff"/><rect x="6.8" y="10.2" width="1.3" height="1.2" fill="#fff"/></g></svg>
<div style="position:absolute;left:261px;top:79px;width:202px;height:553px;background:#fff;border:1px solid #c5ccd6;"></div>
<div style="position:absolute;left:261px;top:235px;width:202px;height:21px;background:#2e5f7d;"></div>
<div class="a" style="top:83.22px;font-size:12.5px;line-height:12.5px;color:#333;left:283.70px;">Import Estimate</div>
<div class="a" style="top:102.32px;font-size:12.5px;line-height:12.5px;color:#333;left:283.70px;">Export Estimate</div>
<div class="a" style="top:132.12px;font-size:12.5px;line-height:12.5px;color:#333;left:283.70px;">Shortest Itinerary</div>
<div class="a" style="top:151.52px;font-size:12.5px;line-height:12.5px;color:#b9b9b9;left:283.70px;">Reorder Itinerary</div>
<div class="a" style="top:170.22px;font-size:12.5px;line-height:12.5px;color:#333;left:283.70px;">Map Itinerary (Local Engine)</div>
<div class="a" style="top:200.42px;font-size:12.5px;line-height:12.5px;color:#333;left:283.70px;">Analysis</div>
<div class="a" style="top:219.92px;font-size:12.5px;line-height:12.5px;color:#333;left:283.70px;">Port Expense History</div>
<div class="a" style="top:239.12px;font-size:12.5px;line-height:12.5px;color:#f2f5f8;left:283.70px;">Bunker Planning</div>
<div class="a" style="top:258.72px;font-size:12.5px;line-height:12.5px;color:#333;left:283.70px;">Update Commencement Data</div>
<div class="a" style="top:278.22px;font-size:12.5px;line-height:12.5px;color:#333;left:283.70px;">Delays</div>
<div class="a" style="top:297.72px;font-size:12.5px;line-height:12.5px;color:#333;left:283.70px;">Profit Share</div>
<div class="a" style="top:317.12px;font-size:12.5px;line-height:12.5px;color:#333;left:283.70px;">Piracy Avoidance</div>
<div class="a" style="top:336.62px;font-size:12.5px;line-height:12.5px;color:#333;left:283.70px;">ECA Avoidance</div>
<div class="a" style="top:356.02px;font-size:12.5px;line-height:12.5px;color:#333;left:283.70px;">Attachments</div>
<div class="a" style="top:375.52px;font-size:12.5px;line-height:12.5px;color:#333;left:283.70px;">Vessel Details</div>
<div class="a" style="top:394.52px;font-size:12.5px;line-height:12.5px;color:#333;left:283.70px;">Worldscale Differentials</div>
<div class="a" style="top:423.22px;font-size:12.5px;line-height:12.5px;color:#333;left:283.70px;">Create Cargoes</div>
<div class="a" style="top:452.02px;font-size:12.5px;line-height:12.5px;color:#333;left:283.70px;">Exchange Rates</div>
<div class="a" style="top:472.22px;font-size:12.5px;line-height:12.5px;color:#333;left:283.70px;">Vessel Defaults</div>
<div class="a" style="top:503.82px;font-size:12.5px;line-height:12.5px;color:#333;left:283.70px;">Auto Calc. by Max Lift Qty</div>
<div class="a" style="top:523.72px;font-size:12.5px;line-height:12.5px;color:#333;left:283.70px;">Wait for Laycan</div>
<div class="a" style="top:543.02px;font-size:12.5px;line-height:12.5px;color:#333;left:283.70px;">Apply Max TCE Speed</div>
<div class="a" style="top:562.42px;font-size:12.5px;line-height:12.5px;color:#333;left:283.70px;">Apply Min CO2 Speed</div>
<div class="a" style="top:582.22px;font-size:12.5px;line-height:12.5px;color:#333;left:283.70px;">In Progress Voyage</div>
<div class="a" style="top:613.72px;font-size:12.5px;line-height:12.5px;color:#333;left:283.70px;">Use Cargo Grid</div>
<div style="position:absolute;left:262px;top:123px;width:200px;height:1px;background:#cfd5de;"></div>
<div style="position:absolute;left:262px;top:192px;width:200px;height:1px;background:#cfd5de;"></div>
<div style="position:absolute;left:262px;top:415px;width:200px;height:1px;background:#cfd5de;"></div>
<div style="position:absolute;left:262px;top:444px;width:200px;height:1px;background:#cfd5de;"></div>
<div style="position:absolute;left:262px;top:493px;width:200px;height:1px;background:#cfd5de;"></div>
<div style="position:absolute;left:262px;top:603px;width:200px;height:1px;background:#cfd5de;"></div>
<svg style="left:453px;top:204.1px" width="6" height="7" viewBox="0 0 6 7"><path d="M1,0.6 L4.2,3.3 L1,6" fill="none" stroke="#444" stroke-width="1.1"/></svg>
<svg style="left:453px;top:262.1px" width="6" height="7" viewBox="0 0 6 7"><path d="M1,0.6 L4.2,3.3 L1,6" fill="none" stroke="#444" stroke-width="1.1"/></svg>
<svg style="left:453px;top:321.1px" width="6" height="7" viewBox="0 0 6 7"><path d="M1,0.6 L4.2,3.3 L1,6" fill="none" stroke="#444" stroke-width="1.1"/></svg>
<svg style="left:453px;top:340.6px" width="6" height="7" viewBox="0 0 6 7"><path d="M1,0.6 L4.2,3.3 L1,6" fill="none" stroke="#444" stroke-width="1.1"/></svg>
<svg style="left:266px;top:504px" width="12" height="12" viewBox="0 0 12 12"><path d="M1.2,6.2 L4.6,10.6 L10.2,1" fill="none" stroke="#444" stroke-width="1"/></svg>
<svg style="left:266px;top:614px" width="12" height="12" viewBox="0 0 12 12"><path d="M1.2,6.2 L4.6,10.6 L10.2,1" fill="none" stroke="#444" stroke-width="1"/></svg>
<svg style="left:398px;top:240px" width="22" height="27" viewBox="0 0 22 27"><path d="M7.5,12 V3.2 a1.6,1.6 0 0 1 3.2,0 V10.5 V9.2 a1.6,1.6 0 0 1 3.2,0 V11 V10 a1.6,1.6 0 0 1 3.2,0 V11.5 V11.2 a1.4,1.4 0 0 1 2.8,0 V17.5 C19.9,20.5 18.3,22.5 17.3,24.5 H9.8 C8.3,22.5 5,19.5 2.3,16.5 C1.3,15.3 2.3,13.6 3.8,14.2 L7.5,16.8 Z" fill="#fff" stroke="#000" stroke-width="1"/></svg>
</body></html>
